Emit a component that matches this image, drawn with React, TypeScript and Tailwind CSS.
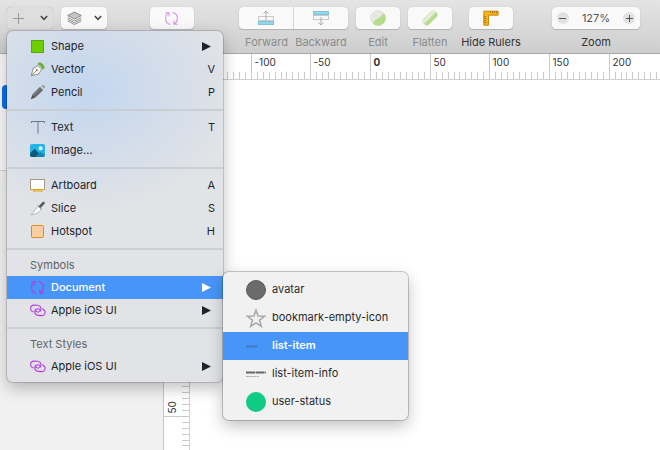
import type { ReactNode } from "react";

const UNIT = 59.65; // px on screen between two labelled ruler marks

function SymbolIcon() {
  return (
    <svg width="16" height="15" viewBox="0 1 16 15" fill="none" stroke="#b43ddb" strokeWidth="1.1">
      <path d="M6.300 14.600C3.400 13.700 1.600 11.400 1.600 8.500c0-2.300 1.200-4.400 3.200-5.600M1.200 2.700h3.900v3.700" />
      <path d="M8.700 2.400c2.900.9 4.700 3.200 4.700 6.100 0 2.300-1.200 4.400-3.200 5.600M13.800 14.300H9.900v-3.700" />
    </svg>
  );
}

function LinkIcon() {
  return (
    <svg width="16" height="15" viewBox="0 1 16 15" fill="none" stroke="#b43ddb" strokeWidth="1.1" strokeLinecap="round">
      <path d="M2.800 9.800C1.300 9.100.5 7.700.6 6.200.8 4.200 2.400 3 4.400 3.100l2.800.2c2.200.2 3.800 1.700 3.800 3.700s-1.600 3.200-3.500 3c-1.400-.1-2-1-1.900-1.900" />
      <path d="M12.500 6.900c1.600.6 2.700 1.900 2.600 3.600-.2 2-1.800 3.200-3.800 3.100l-2.800-.2c-2.200-.2-3.800-1.700-3.800-3.700s1.600-3.200 3.500-3c1.400.1 2 1 1.900 1.900" />
    </svg>
  );
}

function ShapeIcon() {
  return (
    <svg width="16" height="15" viewBox="0 1 16 15">
      <rect x="1.500" y="2.500" width="12" height="12" fill="#6dce00" stroke="#58a80a" />
    </svg>
  );
}

function VectorIcon() {
  return (
    <svg width="16" height="15" viewBox="0 1 16 15">
      <path d="M1.300 14.700 3 7.700 8 4.500l3.700 3.700-3.100 4.900z" fill="#fbfbf8" stroke="#85857c" strokeWidth=".9" />
      <path d="M1.500 14.500 6.300 9.700" stroke="#77776f" strokeWidth=".8" />
      <circle cx="6.900" cy="9.200" r="1" fill="#77776f" />
      <path d="M7.300 3.300 9.500 1.200c2.300.5 4.700 2.700 5.300 5.200l-2.200 2.300C12.100 6.300 9.700 3.900 7.300 3.300z" fill="#69ad2f" />
    </svg>
  );
}

function PencilIcon() {
  return (
    <svg width="16" height="15" viewBox="0 1 16 15">
      <path d="M.8 15.200l1.600-4.700 3.100 3.100z" fill="#55504a" />
      <path d="M2.400 10.500 10.100 2.800l3.100 3.100-7.700 7.700z" fill="#666970" />
      <path d="M3.500 11.400 11 3.900" stroke="#898b90" strokeWidth=".8" />
      <path d="M10.100 2.800l1.100-1.100 3.100 3.100-1.100 1.100z" fill="#d6d7d9" />
      <path d="M11.400 1.900l.5-.5c.7-.7 1.500-.6 2.100 0l.6.600c.6.600.7 1.400 0 2.100l-.5.5z" fill="#999ba0" />
    </svg>
  );
}

function TextIcon() {
  return (
    <svg width="16" height="15" viewBox="0 1 16 15" fill="none" stroke="#6d7784">
      <path d="M1.500 4V2.500h13V4M8 2.500v12" />
    </svg>
  );
}

function ImageIcon() {
  return (
    <svg width="16" height="15" viewBox="0 1 16 15">
      <rect x="0" y="2" width="15" height="13" rx="2" fill="#22b4e6" />
      <circle cx="10.600" cy="6.200" r="2" fill="#e9fbff" />
      <path d="M0 11.500 4.600 6.700 10 12.500V15H2a2 2 0 0 1-2-2z" fill="#0b5878" />
      <path d="M6.500 13.500 10.300 9.800 15 13.300A2 2 0 0 1 13 15H6.500z" fill="#1787b4" />
    </svg>
  );
}

function ArtboardIcon() {
  return (
    <svg width="16" height="15" viewBox="0 1 16 15">
      <path d="M4.500 12.500 3.500 15M11 12.500l1 2.500" stroke="#c79a21" />
      <rect x=".5" y="2.500" width="14" height="10" fill="#fff" stroke="#a8998a" />
      <path d="M0 12.500h15" stroke="#d9a521" />
      <rect x="3" y="13" width="9" height="1.500" fill="#edba31" />
    </svg>
  );
}

function SliceIcon() {
  return (
    <svg width="16" height="15" viewBox="0 1 16 15">
      <path d="M1 14.800 8.200 6.200l3 2.800C10 12 6.500 14.300 1 14.800z" fill="#fafafa" stroke="#a4a6a8" strokeWidth=".8" />
      <path d="M8.300 6.400 13 1.800c1-.6 2.300.5 1.700 1.700l-4 4.600z" fill="#55595d" />
      <path d="M7.800 5.500 11.500 9" stroke="#85898c" />
    </svg>
  );
}

function HotspotIcon() {
  return (
    <svg width="16" height="15" viewBox="0 1 16 15">
      <rect x="1.500" y="2.500" width="12" height="12" rx="1" fill="#fbcfa1" stroke="#df8a16" />
    </svg>
  );
}

function Chevron() {
  return (
    <svg width="8" height="6" viewBox="0 0 8 6" fill="none" stroke="#444" strokeWidth="1.500">
      <path d="M.8 1 4 4.300 7.200 1" />
    </svg>
  );
}

interface MenuItemProps {
  icon: ReactNode;
  label: string;
  shortcut?: string;
  submenu?: boolean;
  active?: boolean;
}

function MenuItem({ icon, label, shortcut, submenu, active }: MenuItemProps) {
  return (
    <button role="menuitem" className={`flex h-[23px] w-full items-center gap-[5px] pl-[23px] ${submenu ? "pr-3" : "pr-2"} ${active ? "bg-[#4795f8] font-medium text-white" : "text-[#1d232b]"}`}>
      {icon}
      <span className="flex-1 text-left">{label}</span>
      {shortcut && <span>{shortcut}</span>}
      {submenu && (
        <svg width="9" height="9" viewBox="0 0 9 9" fill="currentColor">
          <path d="M0 0v9L9 4.500z" />
        </svg>
      )}
    </button>
  );
}

const Separator = () => <div className="flex h-3 items-center"><div className="h-[2px] w-full bg-[#c6cad0]/80" /></div>;

const SectionTitle = ({ children }: { children: ReactNode }) => (
  <div className="flex h-[21px] items-center pl-[23px] text-[#606367]">{children}</div>
);

function InsertMenu() {
  return (
    <div role="menu" className="absolute top-[31px] left-[7px] w-[216px] rounded-md bg-[#e1e3e6] bg-[radial-gradient(ellipse_150px_120px_at_80px_60px,#c3d6ef,transparent)] py-1 shadow-[0_0_0_1px_rgba(0,0,0,0.15),0_6px_16px_rgba(0,0,0,0.25)]">
      <MenuItem icon={<ShapeIcon />} label="Shape" submenu />
      <MenuItem icon={<VectorIcon />} label="Vector" shortcut="V" />
      <MenuItem icon={<PencilIcon />} label="Pencil" shortcut="P" />
      <Separator />
      <MenuItem icon={<TextIcon />} label="Text" shortcut="T" />
      <MenuItem icon={<ImageIcon />} label="Image…" />
      <Separator />
      <MenuItem icon={<ArtboardIcon />} label="Artboard" shortcut="A" />
      <MenuItem icon={<SliceIcon />} label="Slice" shortcut="S" />
      <MenuItem icon={<HotspotIcon />} label="Hotspot" shortcut="H" />
      <Separator />
      <SectionTitle>Symbols</SectionTitle>
      <MenuItem icon={<SymbolIcon />} label="Document" submenu active />
      <MenuItem icon={<LinkIcon />} label="Apple iOS UI" submenu />
      <Separator />
      <SectionTitle>Text Styles</SectionTitle>
      <MenuItem icon={<LinkIcon />} label="Apple iOS UI" submenu />
    </div>
  );
}

const symbols = [
  { name: "avatar", icon: <span className="size-5 rounded-full border border-[#5b5b5b] bg-[#6b6b6b]" /> },
  {
    name: "bookmark-empty-icon",
    icon: (
      <svg width="20" height="20" viewBox="0 0 20 20" fill="none" stroke="#a5a5a5" strokeWidth="1.500">
        <path d="M10 2.200l2.200 5.900 6.300.2-5 3.900 1.800 6.100-5.300-3.500-5.300 3.500 1.800-6.100-5-3.900 6.300-.2z" />
      </svg>
    ),
  },
  {
    name: "list-item",
    icon: (
      <svg width="20" height="20" viewBox="0 0 20 20" stroke="#3f6ca8">
        <path d="M0 10.500h11" strokeWidth="2" strokeDasharray="3 .3" opacity=".75" />
      </svg>
    ),
  },
  {
    name: "list-item-info",
    icon: (
      <svg width="20" height="20" viewBox="0 0 20 20">
        <path d="M0 8.500h20" stroke="#666" strokeWidth="2" strokeDasharray="9 .6" />
        <path d="M0 12.500h13" stroke="#b5b5b5" strokeDasharray="5 .4" />
      </svg>
    ),
  },
  { name: "user-status", icon: <span className="size-5 rounded-full bg-[#0fcb84]" /> },
];

function SymbolMenu() {
  return (
    <div role="menu" className="absolute top-[272px] left-[223px] w-[185px] rounded-md bg-[#f1f1f1] py-1 shadow-[0_0_0_1px_rgba(0,0,0,0.2),0_6px_16px_rgba(0,0,0,0.25)]">
      {symbols.map(s => (
        <button key={s.name} role="menuitem" className={`flex h-7 w-full items-center gap-[6px] pl-[23px] ${s.name === "list-item" ? "bg-[#4795f8] font-semibold text-white" : "text-[#2a2a2a]"}`}>
          {s.icon}
          <span className="pb-px">{s.name}</span>
        </button>
      ))}
    </div>
  );
}

const toolButton = "flex h-[22px] items-center justify-center rounded bg-[#f9f9f9] shadow-[0_0_1px_rgba(0,0,0,0.25),0_1px_1px_rgba(0,0,0,0.15)]";

function Tool({ label, className, muted, children }: { label: string; className: string; muted?: boolean; children: ReactNode }) {
  return (
    <label className={`flex shrink-0 flex-col items-center gap-[5px] whitespace-nowrap ${className} ${muted ? "text-[#8a8a8a]" : "text-[#333]"}`}>
      {children}
      <span>{label}</span>
    </label>
  );
}

function Toolbar() {
  return (
    <header className="flex h-[54px] items-start border-b border-[#a9a9a9] bg-linear-to-b from-[#e4e4e4] to-[#cecece] pt-[7px] pl-[7px] leading-4">
      <button aria-label="Insert" className="flex h-[22px] w-[46px] shrink-0 items-center justify-center gap-4 rounded bg-[#dedede] shadow-[0_0_1px_rgba(0,0,0,0.3)]">
        <svg width="11" height="11" viewBox="0 0 11 11" stroke="#999">
          <path d="M5.500 0v11M0 5.500h11" />
        </svg>
        <Chevron />
      </button>
      <button aria-label="Data" className={`ml-2 w-[46px] shrink-0 gap-3 ${toolButton}`}>
        <svg width="15" height="14" viewBox="0 0 15 14" fill="none" stroke="#777" strokeWidth=".8">
          <path d="M.7 4.500 7.500 1l6.800 3.500L7.500 8z" fill="#c5c5c5" />
          <path d="M.7 6.500 7.500 10l6.800-3.500M.7 8.300l6.800 3.500 6.800-3.500M.7 10l6.800 3.500 6.800-3.500" />
        </svg>
        <Chevron />
      </button>
      <button aria-label="Create Symbol" className={`ml-[43px] w-11 shrink-0 ${toolButton}`}>
        <span className="opacity-50"><SymbolIcon /></span>
      </button>
      <div className="ml-[45px] flex shrink-0">
        <Tool label="Forward" className="w-[55px]" muted>
          <button className={`w-full rounded-r-none border-r border-[#ddd] ${toolButton}`}>
            <svg width="16" height="16" viewBox="0 0 16 16" fill="none" stroke="#aaa">
              <rect x=".5" y="6.500" width="15" height="4" stroke="#c9c9c9" />
              <rect x=".5" y="11.500" width="15" height="3" fill="#8fd9ec" stroke="#82c3d5" />
              <path d="M8 10V1M5.500 3.500 8 1l2.500 2.500" />
            </svg>
          </button>
        </Tool>
        <Tool label="Backward" className="w-[54px]" muted>
          <button className={`w-full rounded-l-none ${toolButton}`}>
            <svg width="16" height="16" viewBox="0 0 16 16" fill="none" stroke="#aaa">
              <rect x=".5" y="1.500" width="15" height="3" fill="#8fd9ec" stroke="#82c3d5" />
              <rect x=".5" y="5.500" width="15" height="4" stroke="#c9c9c9" />
              <path d="M8 7v8M5.500 12.500 8 15l2.500-2.500" />
            </svg>
          </button>
        </Tool>
      </div>
      <Tool label="Edit" className="ml-2 w-11" muted>
        <button className={`w-full ${toolButton}`}>
          <svg width="16" height="16" viewBox="0 0 16 16">
            <circle cx="8" cy="8" r="7.300" fill="#e6e8e3" stroke="#d0d5cb" strokeWidth=".6" />
            <path d="M13.800 3.200a7.500 7.500 0 0 1-10.600 10.600C4.300 10 5.800 9.500 8 8.500S11.500 5 13.800 3.200z" fill="#b4de8c" />
          </svg>
        </button>
      </Tool>
      <Tool label="Flatten" className="ml-2 w-11" muted>
        <button className={`w-full ${toolButton}`}>
          <svg width="16" height="16" viewBox="0 0 16 16">
            <rect x="-.5" y="4" width="17" height="8" rx="3.500" transform="rotate(-45 8 8)" fill="#b4de8c" />
            <path d="M2 11.500 11.500 2" stroke="#e6eadf" strokeWidth="3.500" strokeLinecap="round" />
          </svg>
        </button>
      </Tool>
      <Tool label="Hide Rulers" className="ml-[17px] w-11">
        <button className={`w-full ${toolButton}`}>
          <svg width="16" height="16" viewBox="0 0 16 16">
            <path d="M.8 1.200h14.400v4H5.500v10H.8z" fill="#f5b51b" stroke="#cc8b0b" />
            <path d="M7.500 1v2M9.500 1v2.500M11.500 1v2M13.500 1v2.500M1 6.500h2M1 8.500h2.500M1 10.500h2M1 12.500h2.500" stroke="#a56d08" strokeWidth=".8" />
          </svg>
        </button>
      </Tool>
      <div className="ml-[39px] flex w-[88px] shrink-0 flex-col items-center gap-[5px] text-[#333]">
        <div className={`w-full gap-[13px] ${toolButton}`}>
          <button aria-label="Zoom out" className="flex size-3 items-center justify-center rounded-full bg-[#e2e2e2]">
            <svg width="7" height="7" viewBox="0 0 7 7" stroke="#555"><path d="M0 3.500h7" /></svg>
          </button>
          <span className="text-[#555]">127%</span>
          <button aria-label="Zoom in" className="flex size-3 items-center justify-center rounded-full bg-[#e2e2e2]">
            <svg width="7" height="7" viewBox="0 0 7 7" stroke="#555"><path d="M0 3.500h7M3.500 0v7" /></svg>
          </button>
        </div>
        <span>Zoom</span>
      </div>
    </header>
  );
}

// Ticks that fit in `length`, counted from the mark `first`; origin is the zero mark in the ruler's own pixels
function ticks(origin: number, first: number, length: number) {
  const step = UNIT / 10;
  const count = Math.max(0, Math.ceil((length - origin) / step) - first);
  return Array.from({ length: count }, (_, n) => ({ i: first + n, pos: Math.round(origin + (first + n) * step) + 0.5 }));
}

function TopRuler() {
  return (
    <svg className="h-[26px] w-full border-b border-[#cfcfcf] bg-white" fontSize="10" fill="#333">
      {ticks(206, -29, window.innerWidth - 164).map(({ i, pos }) => (
        <g key={i}>
          <path d={`M${pos} ${i % 10 ? 18 : 0}V26`} stroke="#c9c9c9" />
          {i % 10 === 0 && i >= -20 && <text x={pos + 3} y="12" fontWeight={i ? 400 : 700}>{i * 5}</text>}
        </g>
      ))}
    </svg>
  );
}

function SideRuler() {
  return (
    <svg className="w-[26px] shrink-0 border-r border-[#cfcfcf] bg-white" fontSize="10" fill="#333">
      {ticks(276, 1, window.innerHeight - 80).map(({ i, pos }) => (
        <g key={i}>
          <path d={`M${i % 10 ? 18 : 0} ${pos}H26`} stroke="#c9c9c9" />
          {i % 10 === 0 && <text transform={`translate(12 ${pos - 3}) rotate(-90)`}>{i * 5}</text>}
        </g>
      ))}
    </svg>
  );
}

export default function App() {
  return (
    <div className="relative flex h-screen flex-col overflow-hidden bg-white font-[Inter,sans-serif] text-[11px] select-none">
      <Toolbar />
      <div className="flex min-h-0 flex-1">
        <aside className="w-[164px] shrink-0 border-r border-[#c6c6c6] bg-[#f1f1f1]">
          <div className="h-[117px] border-b border-[#d5d5d5] bg-[#f8f8f8] pt-[31px] pl-[2px]">
            <div className="h-6 rounded bg-[#0a6cf0]" />
          </div>
        </aside>
        <main className="flex min-w-0 flex-1 flex-col">
          <TopRuler />
          <div className="flex min-h-0 flex-1">
            <SideRuler />
            <div className="flex-1 bg-white" />
          </div>
        </main>
      </div>
      <InsertMenu />
      <SymbolMenu />
    </div>
  );
}
